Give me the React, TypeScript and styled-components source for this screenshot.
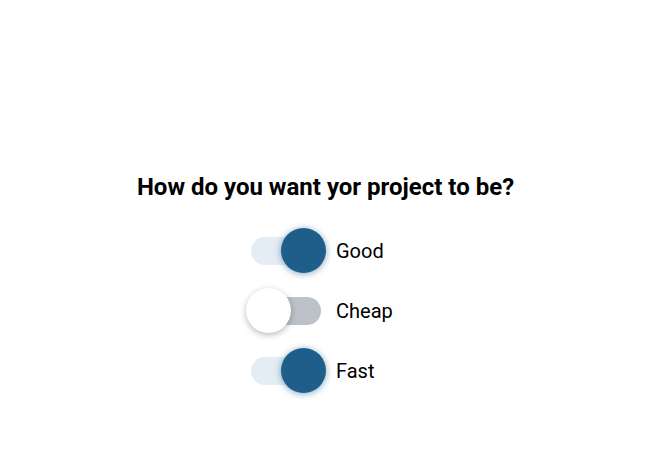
import React, { useState } from "react";
import styled, { createGlobalStyle } from "styled-components";

const Global = createGlobalStyle`
  html, body { margin: 0; padding: 0; background: #ffffff; }
  body { font-family: Roboto, "Liberation Sans", sans-serif; color: #000; }
`;

const Page = styled.div`
  width: 645px;
  height: 461px;
  display: flex;
  flex-direction: column;
  align-items: center;
  padding-top: 172px;
  box-sizing: border-box;
`;

const Title = styled.h2`
  margin: 0 0 26px 6px;
  font-size: 24px;
  font-weight: 700;
  line-height: 30px;
  letter-spacing: 0;
`;

const Options = styled.div`
  width: 153px;
  display: flex;
  flex-direction: column;
  gap: 15px;
`;

const Row = styled.label`
  display: flex;
  align-items: center;
  height: 45px;
  cursor: pointer;
`;

const Track = styled.div<{ $on: boolean }>`
  position: relative;
  width: 70px;
  height: 28px;
  margin: 0 15px 0 5px;
  border-radius: 14px;
  background: ${(p) => (p.$on ? "#e5edf4" : "#bcc2c7")};
  flex-shrink: 0;
`;

const Knob = styled.div<{ $on: boolean }>`
  position: absolute;
  top: 50%;
  left: ${(p) => (p.$on ? "30px" : "-5px")};
  width: 45px;
  height: 45px;
  margin-top: -22.5px;
  border-radius: 50%;
  background: ${(p) => (p.$on ? "#1f5e8b" : "#ffffff")};
  box-shadow: ${(p) =>
    p.$on
      ? "0 1px 7px rgba(31, 94, 139, 0.55)"
      : "0 2px 6px rgba(0, 0, 0, 0.28)"};
`;

const Label = styled.span`
  font-size: 20px;
  font-weight: 400;
`;

const items = [
  { name: "Good", on: true },
  { name: "Cheap", on: false },
  { name: "Fast", on: true },
];

export default function App() {
  const [state, setState] = useState(items.map((i) => i.on));
  return (
    <>
      <Global />
      <Page>
        <Title>How do you want yor project to be?</Title>
        <Options>
          {items.map((it, i) => (
            <Row
              key={it.name}
              onClick={() =>
                setState((s) => s.map((v, j) => (j === i ? !v : v)))
              }
            >
              <Track $on={state[i]}>
                <Knob $on={state[i]} />
              </Track>
              <Label>{it.name}</Label>
            </Row>
          ))}
        </Options>
      </Page>
    </>
  );
}
